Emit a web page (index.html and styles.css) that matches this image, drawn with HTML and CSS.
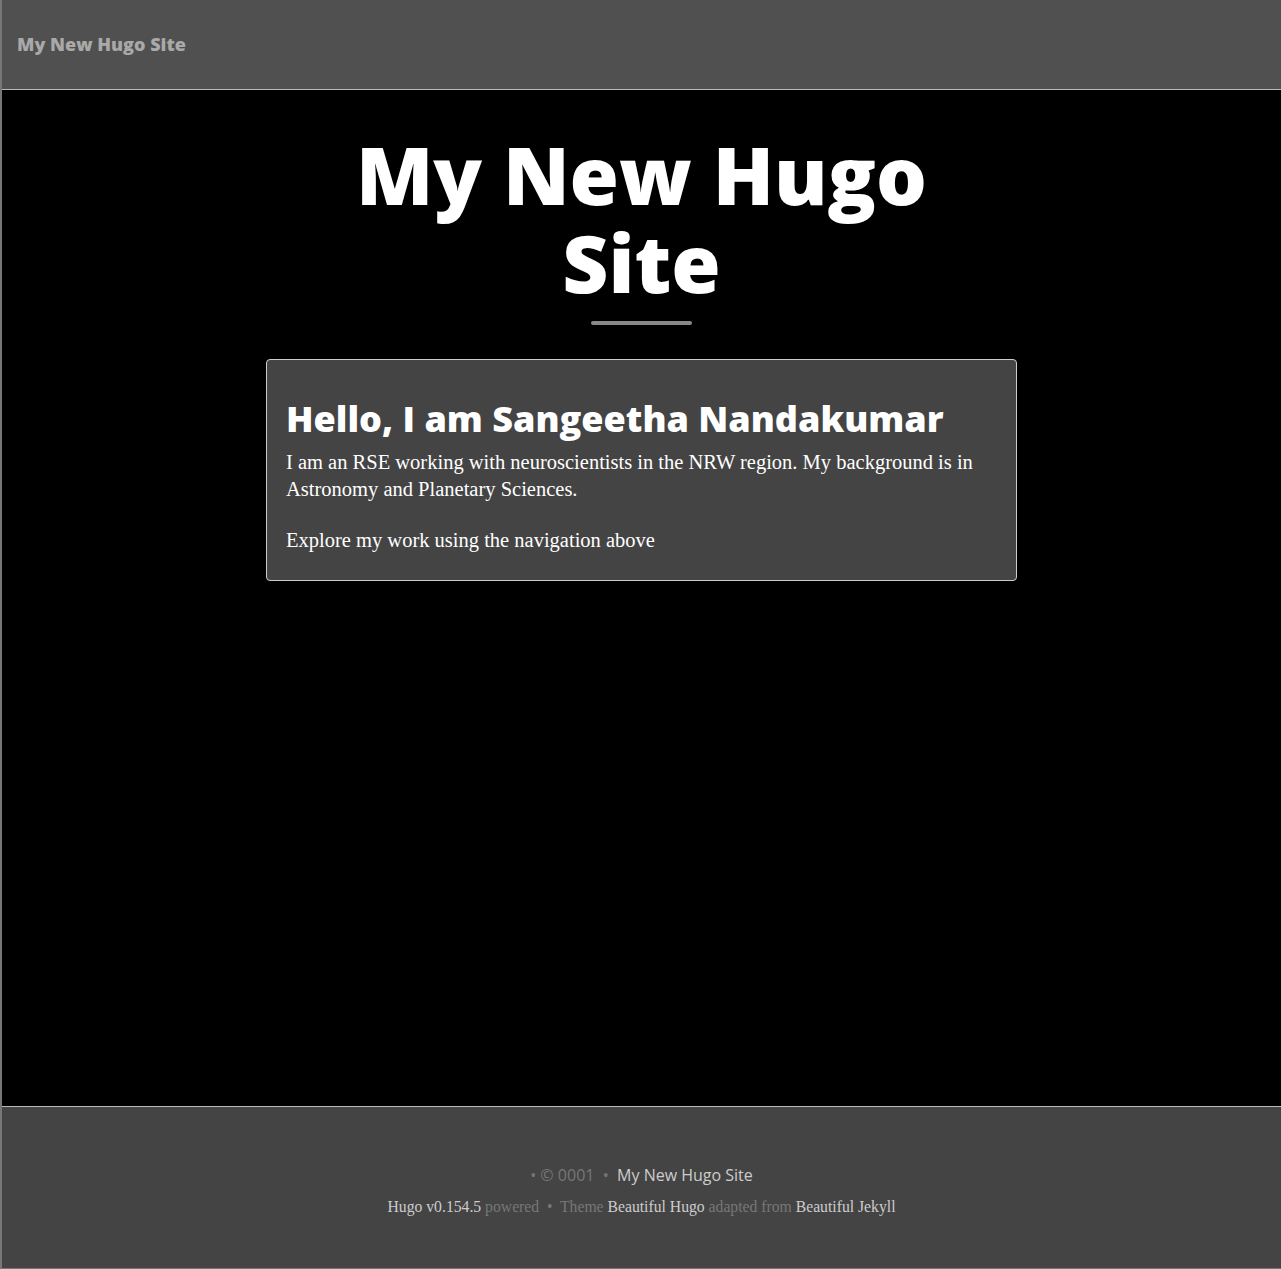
FILE: index.html
```html
<!DOCTYPE html>
<html lang="en">
<head>
    <meta charset="UTF-8">
    <title>My New Hugo Site</title>
    <link rel="stylesheet" href="styles.css">
</head>
<body>
<div class="page">
    <nav class="navbar">
        <a class="brand" href="#">My New Hugo Site</a>
    </nav>

    <header class="intro">
        <h1>My New Hugo<br>Site</h1>
        <hr class="small">
    </header>

    <main class="content">
        <div class="card">
            <h2>Hello, I am Sangeetha Nandakumar</h2>
            <p>I am an RSE working with neuroscientists in the NRW region. My background is in Astronomy and Planetary Sciences.</p>
            <p>Explore my work using the navigation above</p>
        </div>
    </main>

    <footer class="footer">
        <p class="copy">&bull; &copy; 0001 &nbsp;&bull;&nbsp; <a href="#">My New Hugo Site</a></p>
        <p class="credits"><a href="#">Hugo v0.154.5</a> powered &nbsp;&bull;&nbsp; Theme <a href="#">Beautiful Hugo</a> adapted from <a href="#">Beautiful Jekyll</a></p>
    </footer>
</div>
</body>
</html>
```

FILE: styles.css
```css
*{
    margin: 0;
    padding: 0;
    box-sizing: border-box;
}
body{
    background: #000;
    color: #fff;
    font-family: "Liberation Serif", "DejaVu Serif", serif;
}
a{
    text-decoration: none;
}
.page{
    height: 1269px;
    display: flex;
    flex-direction: column;
    border-left: 2px solid #777;
    border-bottom: 1px solid #777;
}
.navbar{
    height: 90px;
    background: #505050;
    border-bottom: 1px solid #bbb;
    display: flex;
    align-items: center;
    padding-left: 15px;
}
.brand{
    font-family: "Open Sans", sans-serif;
    font-weight: 800;
    font-size: 18px;
    color: #a9a9a9;
    margin-top: -2px;
}
.intro{
    text-align: center;
    padding-top: 40px;
}
.intro h1{
    font-family: "Open Sans", sans-serif;
    font-weight: 800;
    font-size: 80px;
    line-height: 88px;
}
.small{
    width: 101px;
    margin: 15px auto 0;
    border: none;
    border-top: 4px solid #888;
    border-radius: 2px;
}
.content{
    flex: 1;
    padding-top: 34px;
}
.card{
    width: 751px;
    margin: 0 auto;
    background: #444;
    border: 1px solid #ccc;
    border-radius: 4px;
    padding: 39px 19px 2px;
}
.card h2{
    font-family: "Open Sans", sans-serif;
    font-weight: 800;
    font-size: 36px;
    line-height: 40px;
    margin-bottom: 10px;
}
.card p{
    font-size: 20.5px;
    line-height: 27px;
    margin-bottom: 24px;
}
.footer{
    height: 162px;
    background: #444;
    border-top: 1px solid #bbb;
    text-align: center;
    padding-top: 57px;
}
.copy{
    font-family: "Open Sans", sans-serif;
    font-size: 16px;
    color: #777;
    line-height: 22px;
}
.copy a{
    color: #ccc;
}
.credits{
    margin-top: 12px;
    font-size: 15.7px;
    color: #777;
}
.credits a{
    color: #ccc;
}
```
